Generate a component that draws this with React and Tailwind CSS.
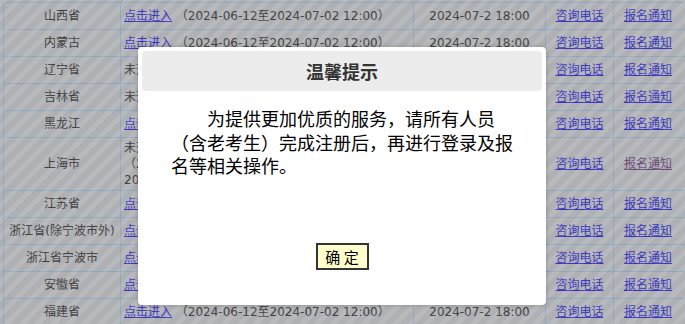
import React from "react";

const rows = [
  { p: "山西省", kind: "link" },
  { p: "内蒙古", kind: "link" },
  { p: "辽宁省", kind: "closed" },
  { p: "吉林省", kind: "closed" },
  { p: "黑龙江", kind: "link" },
  { p: "上海市", kind: "sh" },
  { p: "江苏省", kind: "link" },
  { p: "浙江省(除宁波市外)", kind: "link" },
  { p: "浙江省宁波市", kind: "link" },
  { p: "安徽省", kind: "link" },
  { p: "福建省", kind: "link" },
];

const linkCls = "text-[#3a35c0] underline";

function Cell2({ kind }) {
  if (kind === "link")
    return (
      <>
        <a className={linkCls} href="#">点击进入</a> （2024-06-12至2024-07-02 12:00）
      </>
    );
  if (kind === "closed") return <>未开通网上报名，请关注当地考试机构通知</>;
  return (
    <>
      未开通网上报名，请关注当地考试机构通知
      <br />
      （2024-06-12至2024-07-02 12:00，
      <br />
      2024-07-02 18:00截止）
    </>
  );
}

export default function App() {
  return (
    <div className="relative h-[324px] w-[685px] overflow-hidden bg-[#b2b4b7] font-['DejaVu_Sans','Noto_Sans_CJK_SC',sans-serif] text-[12px] leading-4 text-[#404040]">
      <table className="ml-[3px] mt-[2px] w-[710px] table-fixed border-collapse">
        <colgroup>
          <col className="w-[117px]" />
          <col className="w-[293px]" />
          <col className="w-[132px]" />
          <col className="w-[68px]" />
          <col className="w-[100px]" />
        </colgroup>
        <tbody>
          {rows.map((r, i) => (
            <tr key={i} className={r.kind === "sh" ? "h-[53px]" : "h-[27px]"}>
              <td className="border border-[#8eaac2] px-0 text-center whitespace-nowrap">{r.p}</td>
              <td className="border border-[#8eaac2] px-[3px] whitespace-nowrap">
                <Cell2 kind={r.kind} />
              </td>
              <td className="border border-[#8eaac2] text-center whitespace-nowrap">2024-07-2 18:00</td>
              <td className="border border-[#8eaac2] text-center">
                <a className={linkCls} href="#">咨询电话</a>
              </td>
              <td className="border border-[#8eaac2] pl-[10px] text-left">
                <a className={r.kind === "sh" ? "text-[#6b4a78] underline" : linkCls} href="#">报名通知</a>
              </td>
            </tr>
          ))}
        </tbody>
      </table>

      <div className="pointer-events-none absolute inset-0 bg-[repeating-linear-gradient(135deg,rgba(255,255,255,0.07)_0_5px,rgba(0,0,0,0.02)_5px_11px)]" />

      <div className="absolute left-[138px] top-[47px] flex h-[258px] w-[408px] flex-col rounded-[4px] bg-white p-[4px] font-['Noto_Sans_CJK_SC',sans-serif] shadow-[0_0_4px_rgba(0,0,0,0.25)]">
        <div className="flex h-[40px] items-center justify-center rounded-[4px] bg-[#ececec] text-[18px] font-bold text-[#333]">
          温馨提示
        </div>
        <p className="mt-[16px] w-[350px] self-start pl-[29px] box-content indent-[2em] text-[18px] leading-[23.5px] text-black">
          为提供更加优质的服务，请所有人员（含老考生）完成注册后，再进行登录及报名等相关操作。
        </p>
        <div className="mt-auto mb-[31px] flex justify-center">
          <button className="h-[27px] w-[53px] border-2 border-[#333] bg-[#ffffcc] text-[15px] leading-none text-black">
            确 定
          </button>
        </div>
      </div>
    </div>
  );
}
